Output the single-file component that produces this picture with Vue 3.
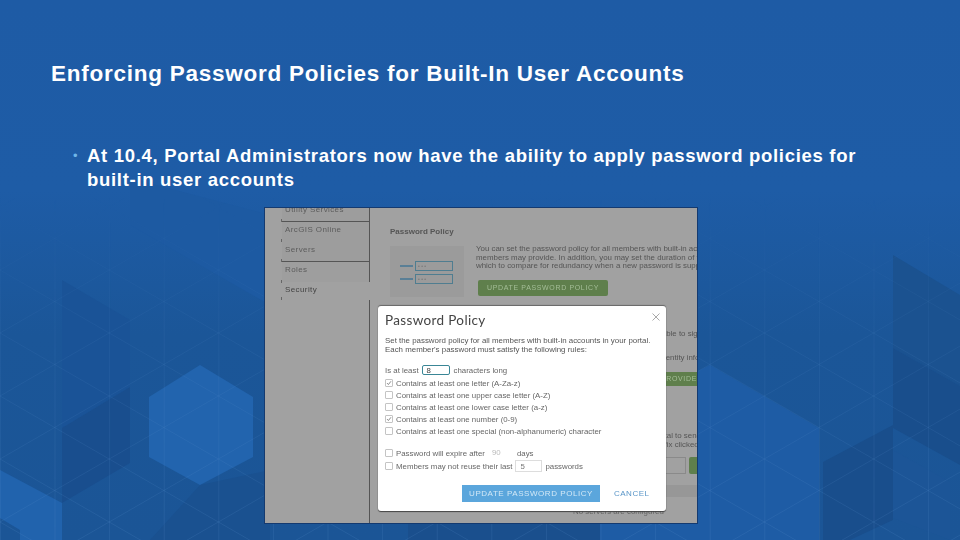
<script setup>
const lattice = []
for (let i = -1; i < 18; i++) {
  const x = 55 + i * 54.6
  lattice.push(`M${x} 0V540`)
}
for (let k = -20; k < 30; k++) {
  const y = k * 63 + 18
  lattice.push(`M0 ${y}L960 ${y + 960 * 0.577}`)
  lattice.push(`M0 ${y}L960 ${y - 960 * 0.577}`)
}
const latticePath = lattice.join('')

const rules = [
  { label: 'Contains at least one letter (A-Za-z)', on: true },
  { label: 'Contains at least one upper case letter (A-Z)', on: false },
  { label: 'Contains at least one lower case letter (a-z)', on: false },
  { label: 'Contains at least one number (0-9)', on: true },
  { label: 'Contains at least one special (non-alphanumeric) character', on: false }
]
const navItems = ['Utility Services', 'ArcGIS Online', 'Servers', 'Roles', 'Security']
</script>

<template>
  <div class="slide">
    <svg class="backdrop" width="960" height="540" viewBox="0 0 960 540" aria-hidden="true">
      <defs>
        <linearGradient id="fade" x1="0" y1="0" x2="0" y2="1">
          <stop offset="0.36" stop-color="#fff" stop-opacity="0" />
          <stop offset="0.62" stop-color="#fff" stop-opacity="0.6" />
          <stop offset="1" stop-color="#fff" stop-opacity="1" />
        </linearGradient>
        <mask id="latticeMask"><rect width="960" height="540" fill="url(#fade)" /></mask>
      </defs>
      <polygon points="130,178 130,225 270,305 270,215" fill="#1d5aa2" />
      <polygon points="62,280 130,320 130,387 62,428" fill="#1a5397" />
      <polygon points="62,428 130,387 130,463 62,503" fill="#194e8e" />
      <polygon points="0,470 62,503 62,540 20,540 20,530 0,518" fill="#2163ad" />
      <polygon points="200,365 253,397 253,457 200,485 149,457 149,397" fill="#2264ae" />
      <polygon points="200,485 150,540 270,540 270,470" fill="#1a5190" />
      <polygon points="710,365 819,428 819,540 600,540 600,420" fill="#1e5ca5" />
      <polygon points="408,500 600,500 600,540 408,540" fill="#1a4f8d" />
      <polygon points="893,255 960,295 960,386 893,348" fill="#1b5290" />
      <polygon points="893,348 960,386 960,465 893,428" fill="#194e8c" />
      <polygon points="823,462 893,425 893,520 850,540 823,540" fill="#194e8c" />
      <polygon points="893,450 950,482 950,540 893,518" fill="#1c5597" />
      <path :d="latticePath" mask="url(#latticeMask)" stroke="#5d92d2" stroke-opacity="0.17" stroke-width="1" fill="none" />
    </svg>

    <div class="content">
      <h1 class="title">Enforcing Password Policies for Built-In User Accounts</h1>
      <ul class="bullets">
        <li class="bullet">
          <span class="dot">•</span>
          <span>At 10.4, Portal Administrators now have the ability to apply password policies for<br />built-in user accounts</span>
        </li>
      </ul>

      <div class="shot">
        <aside class="nav">
          <div v-for="item in navItems" :key="item" class="nav-item" :class="{ active: item === 'Security' }">{{ item }}</div>
        </aside>
        <main class="pane">
          <h2 class="pane-title">Password Policy</h2>
          <div class="policy-row">
            <div class="illus">
              <div class="illus-row"><i class="dash"></i><b class="fake-input">• • •</b></div>
              <div class="illus-row"><i class="dash"></i><b class="fake-input">• • •</b></div>
            </div>
            <div class="policy-copy">
              <p>You can set the password policy for all members with built-in accounts</p>
              <p>members may provide. In addition, you may set the duration of the policy</p>
              <p>which to compare for redundancy when a new password is supplied.</p>
              <div class="green-btn">UPDATE PASSWORD POLICY</div>
            </div>
          </div>
          <div class="lower">
            <p class="l1">Specify whether members of your portal will be able to sign in</p>
            <p class="l2">Specify your organization's enterprise identity information</p>
            <div class="green-btn wide">SET IDENTITY PROVIDER</div>
            <p class="l3">Configure the portal access settings and the portal to send</p>
            <p class="l4">Members of your portal see this notice when the suffix clicked</p>
            <div class="field-row"><span class="field"></span><span class="green-stub"></span></div>
            <div class="band"></div>
            <p class="l5">No servers are configured</p>
          </div>
        </main>

        <section class="modal">
          <h3 class="modal-title">Password Policy</h3>
          <span class="close">
            <svg width="8" height="8" viewBox="0 0 8 8"><path d="M.5.5l7 7M7.5.5l-7 7" stroke="#aaa" stroke-width="1" fill="none" /></svg>
          </span>
          <p class="intro">Set the password policy for all members with built-in accounts in your portal.</p>
          <p class="intro">Each member's password must satisfy the following rules:</p>
          <div class="min-row">Is at least <span class="num focus">8</span> characters long</div>
          <div v-for="rule in rules" :key="rule.label" class="rule">
            <span class="box">
              <svg v-if="rule.on" width="6" height="6" viewBox="0 0 7 7"><path d="M1.2 3.6l1.6 1.7 3-3.8" stroke="#777" stroke-width="1" fill="none" /></svg>
            </span>
            {{ rule.label }}
          </div>
          <div class="rule expire">
            <span class="box"></span>Password will expire after <span class="num ghost">90</span> days
          </div>
          <div class="rule reuse">
            <span class="box"></span>Members may not reuse their last <span class="num plain">5</span> passwords
          </div>
          <div class="actions">
            <span class="primary">UPDATE PASSWORD POLICY</span>
            <span class="cancel">CANCEL</span>
          </div>
        </section>
      </div>
    </div>
  </div>
</template>

<style>
html, body { margin: 0; }
</style>

<style scoped>
.slide {
  position: relative;
  width: 960px;
  height: 540px;
  overflow: hidden;
  background: linear-gradient(180deg, #1e5ba5 0%, #1e5ca6 35%, #1b5698 62%, #1b5596 100%);
  font-family: "Liberation Sans", Arial, sans-serif;
}
.backdrop { position: absolute; left: 0; top: 0; }
.content { position: relative; padding-top: 60px; }
.title {
  margin: 0 0 56px 51px;
  font-size: 22.5px;
  line-height: 28px;
  font-weight: 700;
  letter-spacing: 0.75px;
  color: #fff;
}
.bullets { margin: 0 0 15px; padding: 0 0 0 73px; list-style: none; }
.bullet {
  display: flex;
  font-size: 18.5px;
  line-height: 24px;
  font-weight: 700;
  letter-spacing: 0.7px;
  color: #fff;
}
.dot { width: 14px; flex: none; font-size: 13px; font-weight: 400; letter-spacing: 0; color: #6fb6e8; }

.shot {
  position: relative;
  display: flex;
  width: 432px;
  height: 315px;
  margin-left: 264px;
  border: 1px solid #143a70;
  background: #a1a1a1;
  overflow: hidden;
  filter: blur(0.4px);
  color: #555;
  font-size: 7.9px;
}
.nav {
  width: 87px;
  flex: none;
  margin-top: -6px;
  margin-left: 17px;
  border-right: 1px solid #555;
}
.nav-item {
  position: relative;
  height: 19px;
  padding-left: 3px;
  border-bottom: 1px solid transparent;
  line-height: 16px;
  font-size: 8px;
  color: #5c5c5c;
  letter-spacing: 0.4px;
  background: #9d9d9d;
}
.nav-item::before {
  content: "";
  position: absolute;
  left: -1px;
  bottom: -1px;
  width: 1px;
  height: 3px;
  background: #666;
}
.nav-item:nth-child(1), .nav-item:nth-child(3) { border-bottom-color: #555; }
.nav-item:nth-child(4) { height: 20px; border-bottom: 0; background: #9e9e9e; }
.nav-item.active {
  height: 17px;
  margin-right: -1px;
  background: #a1a1a1;
  color: #444;
}
.pane { flex: 1; min-width: 0; padding: 19px 0 0 20px; }
.pane-title { margin: 0; font-size: 8px; line-height: 10px; font-weight: 700; color: #555; }
.policy-row { display: flex; margin-top: 9px; }
.illus {
  width: 74px;
  height: 51px;
  flex: none;
  margin-right: 12px;
  padding-top: 15px;
  box-sizing: border-box;
  background: #9b9b9b;
}
.illus-row { display: flex; align-items: center; gap: 2px; height: 10px; margin-bottom: 3px; padding-left: 10px; }
.dash { width: 13px; height: 2px; background: #5a7f96; }
.fake-input {
  width: 34px;
  height: 8px;
  border: 1px solid #4f7d90;
  font-size: 5px;
  line-height: 8px;
  font-weight: 400;
  padding-left: 2px;
  box-sizing: content-box;
  color: #777;
}
.policy-copy { flex: 1; min-width: 0; white-space: nowrap; }
.policy-copy p { margin: 0; line-height: 8.6px; padding-top: 0; }
.policy-copy p:first-child { margin-top: -1px; }
.green-btn {
  width: 130px;
  height: 16px;
  margin: 9px 0 0 2px;
  border-radius: 2px;
  background: #5f7f4c;
  color: #a4bd97;
  text-align: center;
  line-height: 16px;
  letter-spacing: 0.65px;
  font-size: 7px;
}
.lower { margin-top: 32px; padding-left: 86px; white-space: nowrap; }
.lower p { margin: 0; line-height: 9px; }
.l1 { margin-left: 20px !important; }
.l2 { margin-top: 15px !important; margin-left: 50px !important; }
.green-btn.wide { margin: 10px 0 0 82px; width: 190px; height: 14px; line-height: 14px; }
.l3 { margin-top: 45px !important; margin-left: 21px !important; }
.l4 { margin-left: 8px !important; }
.field-row { display: flex; gap: 3px; margin-top: 8px; margin-left: 100px; width: 200px; }
.field { width: 108px; height: 15px; flex: none; border: 1px solid #8a8a8a; box-sizing: content-box; }
.green-stub { width: 30px; height: 17px; flex: none; background: #5f7f4c; border-radius: 2px; }
.band { height: 12px; margin: 11px 0 0 -86px; background: #979797; }
.l5 { margin: 10px 0 0 97px !important; color: #666; }

.modal {
  position: absolute;
  left: 113px;
  top: 98px;
  width: 288px;
  height: 205px;
  box-sizing: border-box;
  padding: 6px 7px 0;
  background: #fff;
  border-radius: 3px;
  box-shadow: 0 1px 1px #444, 0 -1px 1px #666;
  color: #666;
  font-size: 7.85px;
}
.modal-title {
  margin: 0 0 8px;
  font-family: Lato, "Noto Sans", sans-serif;
  font-size: 13.5px;
  line-height: 16px;
  font-weight: 400;
  letter-spacing: 0.35px;
  color: #444;
}
.close { position: absolute; right: 6px; top: 7px; line-height: 0; }
.intro { margin: 0; font-size: 7.9px; line-height: 9px; color: #555; white-space: nowrap; }
.min-row { display: flex; align-items: center; gap: 3px; height: 10px; margin-top: 11px; margin-bottom: 2px; }
.num {
  display: inline-block;
  height: 10px;
  line-height: 10px;
  padding-left: 4px;
  box-sizing: border-box;
  color: #777;
}
.num.focus { width: 28px; border: 1px solid #3a8696; border-radius: 2px; margin: 0 1px 0 0; color: #444; line-height: 9px; }
.num.ghost { width: 26px; color: #bbb; }
.num.plain { width: 27px; height: 12px; line-height: 11px; border: 1px solid #ddd; }
.rule {
  display: flex;
  align-items: center;
  gap: 3px;
  height: 12px;
  white-space: nowrap;
  color: #666;
}
.box {
  width: 8px;
  height: 8px;
  box-sizing: border-box;
  flex: none;
  border: 1px solid #c4c4c4;
  border-radius: 1px;
  line-height: 0;
}
.expire { margin-top: 10px; margin-bottom: 1px; }
.actions { display: flex; align-items: center; margin: 13px 0 0 77px; }
.primary {
  width: 138px;
  height: 17px;
  background: #5ba6dc;
  color: #d3e8f6;
  text-align: center;
  line-height: 17px;
  font-size: 8px;
  letter-spacing: 0.55px;
}
.cancel { margin-left: 14px; font-size: 8px; letter-spacing: 0.5px; color: #5a96c8; }
</style>
